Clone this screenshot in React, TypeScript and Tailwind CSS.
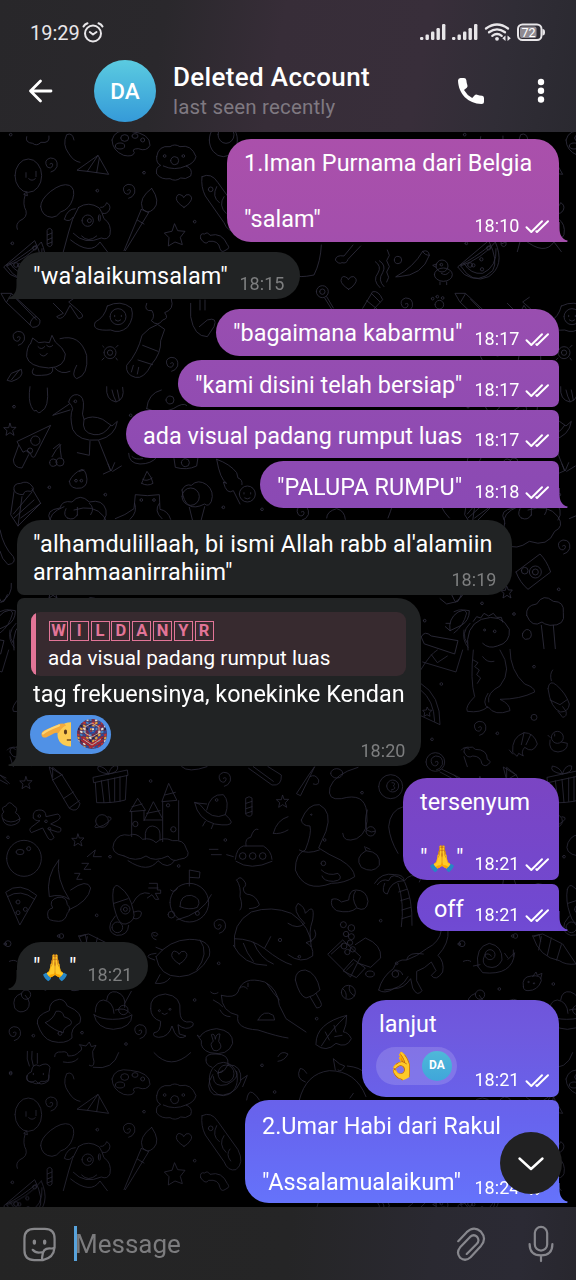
import type { ReactNode } from "react";

const SPIRAL = "m0 0 q9 -6 8 4 q-4 13 -17 4 q-11 -20 10 -26 q24 0 20 26 q-6 14 -18 16";
const HEART = "m0 20 q-22 -14 -23 -26 q2 -17 14 -11 q8 3 8 8 q6 -12 16 -9 q14 8 3 22 q-6 10 -18 16 z";
const STAR = "m0 -30 l9 20 l22 2 l-14 18 l6 22 l-22 -8 l-20 12 l2 -25 l-14 -14 l22 -5 z";
const DOT = "m-4 0 a4 4 0 1 0 8 0 a4 4 0 1 0 -8 0";

function circle(x: number, y: number, r: number, ry = r) {
  return `M${x - r} ${y} a${r} ${ry} 0 1 0 ${2 * r} 0 a${r} ${ry} 0 1 0 ${-2 * r} 0`;
}
const at = (x: number, y: number, d: string) => `M${x} ${y} ${d}`;

/* Wallpaper doodles, drawn at three times their size on the tile. */
const doodles: { x: number; y: number; d: string[] }[] = [
  {
    x: 0,
    y: 130,
    d: [
      "M80 20 q-6 18 18 20 q12 10 25 -3 q28 4 24 -19",
      "M222 30 q-4 -24 -22 -16 q-14 30 6 56 q14 24 34 27",
      "M232 120 L294 76 L326 133 L262 124 Z M294 76 L262 124 M298 84 L290 128",
      "M336 30 q8 -35 55 -26 q60 6 59 42 q-10 20 -35 10 q-22 0 -12 12 q-4 14 -32 8 q-34 -14 -35 -46",
      circle(374, 24, 12, 10), circle(405, 18, 9, 7), circle(360, 48, 14, 9), circle(428, 30, 6),
      "M470 80 q5 -35 40 -30 q14 -10 30 0 q34 -8 48 30 q-5 20 -30 28 q22 8 14 30 q-16 12 -30 6 q-16 12 -32 2 q-26 4 -40 -14 q-4 -20 12 -26 q-14 -6 -12 -26 M490 108 q34 16 68 0",
      circle(524, 92, 12), at(494, 78, DOT), at(550, 78, DOT),
      circle(670, 30, 42, 50), circle(678, 14, 24, 26),
      circle(85, 137, 40, 50), "M78 128 v14 M108 124 v16 M86 146 q10 10 20 0 M72 192 l8 -6 l2 10 z M75 196 q-8 28 3 46 q5 20 -18 30 q-14 10 -8 26",
      at(150, 102, SPIRAL), at(383, 181, SPIRAL), at(432, 128, DOT), at(292, 182, DOT), at(584, 275, DOT), at(37, 340, DOT), at(32, 14, DOT),
      "M122 230 q0 -22 30 -46 q34 -26 56 -18 q20 10 10 42 q-10 30 -36 38 q-12 16 -26 16 q-30 -2 -34 -32",
      "M236 232 q30 -20 62 2 q8 12 14 32 q24 16 18 48 q-8 18 -26 10 q-50 22 -84 -14 M226 236 q-24 0 -33 32 q16 10 26 -6 M302 232 q12 2 18 -14 q14 8 8 22 q-8 14 -20 10 M236 232 q-22 36 -30 74 L190 365 M212 330 q60 48 88 6 L322 365 M245 318 q20 22 45 0",
      circle(263, 272, 17), circle(268, 272, 6), circle(298, 264, 3, 10),
      "M455 175 q-40 30 -28 60 q15 20 34 2 q22 -22 -6 -62 M424 238 L372 362 M446 248 L376 362 M424 238 l22 10 M412 270 l20 12",
      at(552, 212, HEART), at(524, 312, STAR),
      "M606 140 q28 -14 48 18 l60 84 q20 40 -6 60 q-24 6 -36 -24 l-56 -80 q-14 -28 -10 -58", circle(632, 178, 7), "M650 170 q-16 30 8 48 M672 200 q-18 26 6 50 M690 240 q-14 16 2 36",
      "M602 326 q-4 -18 12 -14 q8 -8 16 4 q36 -10 52 28 q10 10 -4 16 q-14 10 -18 -4 q-4 -26 -34 -22 q-10 14 -24 -8",
      "M142 300 q6 -10 14 0 v45 q-8 10 -14 0 z M142 315 l14 -6 M142 330 l14 -6 M142 342 l14 -6",
      "M12 410 L104 332 q30 60 12 90 q-40 40 -84 12 z M20 405 q40 -20 90 -60", circle(48, 405, 7), circle(104, 354, 6),
      "M4 490 l30 0 l86 80 q2 22 -22 22 l-80 -76 z M34 492 l-14 24 M108 560 q-16 4 -18 24 M50 508 l60 62",
      "M160 520 l30 30 l-20 10 q10 12 24 -4 l16 -30 l26 40 q24 -4 0 -24 l-30 -26 l20 -14",
      "M322 528 q40 -20 72 6 q10 30 -12 58 q-24 20 -50 8 q-60 4 -46 -24 q28 -14 36 -48",
      circle(354, 560, 24), "M344 556 v4 M364 556 v4 M346 570 q8 8 16 0",
      "M440 520 q-10 24 16 22 q10 18 -2 30 q20 20 34 -2 q20 -4 6 -22 q30 -10 20 -40 M474 584 l20 14 l-12 34 q2 38 -28 72 q-22 44 -48 38 q-30 -8 -26 -36 q34 -38 46 -90 l22 -20 z M428 646 l46 18 M414 690 l44 14 M400 706 l-6 20 M416 712 l-4 20",
      "M572 520 v40 q10 60 50 60 l20 -30 q12 -30 -20 -20 l-24 20 M600 510 v30 M615 510 v30",
      "M92 640 l6 -16 l18 14 q20 -4 32 0 l8 -22 l10 20 q24 18 30 36 q0 40 -50 42 q-60 -4 -66 -34 q0 -30 12 -40 M180 626 q60 -16 80 50 q6 60 -30 70 q-18 -8 0 -40 M100 716 q-14 24 24 20 q40 0 34 -22 M164 714 q20 22 46 10 M114 650 q10 12 20 0 M140 646 q10 10 18 0 M120 672 q12 14 22 -2",
      at(52, 622, SPIRAL), at(512, 700, SPIRAL), circle(330, 668, 18), circle(330, 668, 8),
      "M312 652 l-4 -4 M348 652 l6 -6 M312 684 l-6 6 M348 684 l4 6",
      "M22 750 l12 -20 l30 -12 q10 24 -28 36 z M34 750 l24 -30",
    ],
  },
  {
    x: 288,
    y: 130,
    d: [
      "M195 345 L168 378 q-24 -4 -26 12 q10 14 20 8 q14 4 18 -10 l38 -40",
      "M20 435 q10 10 58 0 q20 -40 22 -90 M262 395 q20 14 8 34 q-18 22 6 44 M274 392 q22 14 10 36 q-16 22 4 42 M298 360 l6 16 l-8 16 l8 18 l-8 16 l6 16 l-6 14",
      circle(330, 390, 11), "M324 440 q54 -30 80 -76 q18 -6 20 12 q-20 60 -90 64 z M404 364 q6 12 20 12",
      at(182, 458, HEART), circle(103, 485, 18), circle(103, 485, 8), "M116 500 l20 34 M110 504 l20 32 M224 535 l30 -50 q18 -4 30 24 l-28 30 M236 512 l30 24 M250 490 l26 26",
      circle(462, 408, 18), circle(466, 434, 27, 20), at(460, 404, DOT), "M444 412 l-10 -6 l12 -4 M456 456 v8 M476 456 v8 M460 430 q14 10 24 -4",
      at(352, 522, SPIRAL), circle(454, 524, 13), circle(434, 506, 4), circle(448, 500, 4), circle(464, 504, 4),
      "M518 408 q64 -22 104 -72 q30 70 -20 104 q-50 24 -84 -32 M528 400 q20 34 56 30 q44 -20 40 -74", circle(556, 406, 5), circle(580, 388, 5), circle(582, 418, 5),
    ],
  },
  {
    x: 0,
    y: 390,
    d: [
      "M90 -10 q-6 40 4 60 q10 20 14 10 q8 14 16 4 q24 -10 18 -70 M320 -10 q-4 40 28 46 q28 -8 20 -44 M336 0 q4 20 12 34 M352 0 l6 30",
      at(42, 50, DOT), at(30, 116, "m0 -16 l4 12 l14 0 l-10 10 l4 14 l-12 -8 l-12 8 l3 -14 l-10 -9 l14 0 z"), at(392, 76, DOT),
      "M206 36 q6 -24 26 -22 q22 4 18 40 q-6 20 2 34 q24 -14 56 0 l28 20 l16 -14 q-6 44 -56 56 q-60 6 -78 -32 q-10 -40 0 -62 q-2 -10 -12 -20 M208 42 L158 76 L210 60 M252 88 q-10 40 30 46 q30 4 50 -28 M270 154 l-2 42 l-36 -8 M296 152 l36 90 l-22 10 M332 242 l-8 -20 M334 242 l10 -24 M338 244 l26 -16", circle(226, 34, 4),
      "M52 154 L152 106 L104 200 q-8 6 -12 -8 q-8 -16 -22 -6 z M56 166 l-16 44 q2 24 26 24 l20 -40", circle(106, 152, 14), circle(90, 182, 8),
      "M156 200 q12 -24 26 -36 M184 202 q-4 -24 -4 -38 M160 176 l18 -14", circle(160, 218, 11), circle(180, 216, 12),
      "M208 274 q10 -24 38 -36 q10 4 12 14 q10 34 -14 42 q-34 6 -36 -20 M238 244 l14 -4", at(228, 272, DOT), at(244, 272, DOT), at(148, 292, DOT), at(316, 314, DOT), at(670, 352, DOT), at(786, 358, DOT),
      "M425 280 q10 -24 16 -36 q16 20 18 36 q-16 10 -34 0 M428 268 q12 8 28 -4",
      "M42 300 q-4 -20 20 -20 q20 -10 34 8 q10 12 -4 16 q-20 -4 -22 10 q-24 0 -28 -14 M42 305 L32 374 L54 408 L122 340 L96 296 M54 408 L66 320 M40 372 L96 306",
      "M150 390 q-16 -30 30 -36 q6 -24 36 -18 q24 -28 52 0 q40 -10 50 24 q4 16 -6 30 M198 356 q-10 20 4 28 M268 340 q18 14 4 34 M232 352 v24",
      "M346 386 q30 -10 56 -30 l4 -42 q36 6 72 0 l2 44 q24 4 32 30 M404 340 q10 26 -14 48 M478 340 q-18 22 8 46", at(424, 330, DOT), at(462, 330, DOT),
      "M546 300 q10 -20 28 -14 q20 -20 46 -2 q24 20 14 50 q-8 18 -20 8 q-60 30 -68 -42 M568 352 l22 90 l24 -92", circle(572, 320, 26),
      "M650 208 q10 60 30 72 l-10 -4 q10 40 30 26 l20 40 M650 208 q40 14 60 40 l4 16 q14 4 12 20", circle(742, 312, 24), "M732 308 v4 M752 308 v4 M734 324 q8 6 16 0",
      "M386 190 q0 30 34 32 q34 0 50 -20 M396 200 q10 10 32 6 M522 206 l4 26 q34 10 64 -4 l4 -26", circle(556, 218, 12),
      "M440 56 q4 -46 44 -56 M440 56 q40 18 80 0 q30 -20 40 -10", circle(510, 30, 12),
      "M0 420 q10 50 40 80 q10 20 -16 24 q-20 -18 -24 -40 M34 580 q4 36 -30 56",
    ],
  },
  {
    x: 288,
    y: 390,
    d: [
      at(40, 366, SPIRAL), "M116 384 q0 -20 30 -28 q24 6 26 32 M300 384 q8 -20 12 -34 M540 384 L600 330 M560 384 L620 340 M460 350 q10 20 24 34",
      "M650 400 q-10 -30 40 -50 M720 360 q60 -20 90 20 q20 30 -10 44 q-20 50 -76 30 q-40 30 -70 8 q-14 -30 -4 -62 M700 384 q20 10 30 -10",
      "M684 546 L756 492 q20 20 32 54 L720 598 q-24 -20 -36 -52", circle(742, 546, 18), circle(710, 542, 10), circle(742, 546, 9),
      at(824, 468, SPIRAL), at(656, 606, "m0 -18 l5 12 l12 0 l-8 10 l4 14 l-12 -8 l-12 8 l3 -14 l-10 -9 l13 0 z"), at(582, 640, DOT), at(678, 672, DOT), at(812, 598, DOT), at(410, 692, DOT),
      "M486 722 q-6 -36 24 -56 q20 -10 34 -4 q0 30 -24 44 l-34 16 l-14 -12 M486 700 l-12 0 M456 626 l20 16 l34 -8 l10 -20 M490 612 l10 20",
      "M540 780 q-10 -70 40 -92 q60 -20 84 30 q4 40 -36 50 q-26 10 -44 -8 M556 694 l10 -14 l12 4 l10 -14 l14 8 l14 -8 l10 12 l14 0 l4 14", circle(590, 720, 3), at(620, 724, DOT),
      "M716 676 q-4 -30 30 -34 q20 -34 50 -8 q34 0 30 34 q8 40 -40 38 q-20 -4 -24 -10 q-30 20 -46 -20 M760 706 l8 70 M796 706 l6 70 M704 730 q10 -20 24 -6 q8 24 -16 24 q-12 -6 -8 -18",
      "M400 740 q10 -20 30 -2 l80 14 l-10 40 l-90 -30 z",
    ],
  },
  {
    x: 0,
    y: 600,
    d: [
      "M0 35 q30 -14 38 4 q-10 40 -38 60 M48 70 q-30 30 -8 60 M30 90 q-6 30 12 52 M22 450 q10 -14 24 -2 M30 470 l10 30",
      "M0 525 L28 550 M0 540 L22 552", at(78, 546, "m0 -16 l4 12 l14 0 l-10 10 l4 14 l-12 -8 l-12 8 l3 -14 l-10 -9 l14 0 z"), at(234, 718, "m0 -16 l4 12 l14 0 l-10 10 l4 14 l-12 -8 l-12 8 l3 -14 l-10 -9 l14 0 z"), at(848, 602, "m0 -16 l4 12 l14 0 l-10 10 l4 14 l-12 -8 l-12 8 l3 -14 l-10 -9 l14 0 z"),
      "M148 502 l10 38 l50 85 q24 16 32 -14 l-54 -86 z M158 540 l28 -16 M190 596 l30 -20 M208 624 l30 -22",
      "M280 532 l102 -22 l2 16 l-102 22 z M286 548 l4 60 q50 2 86 -8 l4 -74 M304 542 l8 66 M324 538 l6 70 M344 534 v70 M360 530 v74 M325 522 q-40 -6 -30 -24 q24 4 30 24 q10 -30 28 -24 q4 20 -28 24",
      at(670, 535, SPIRAL), at(452, 543, DOT), at(24, 712, DOT), at(676, 720, DOT), at(330, 770, DOT), "M545 500 q20 20 76 0 M746 505 l70 50 q30 4 28 -30 l-40 -25 M760 500 l60 44",
      "M8 656 q24 20 52 0 q-4 -14 -14 -18 q10 -14 -4 -20 q-14 -20 -24 0 q-18 4 -6 18 q-10 6 -4 20 q4 20 26 20 q26 -4 26 -20",
      "M100 654 q-4 -22 16 -24 q22 -2 22 20 l36 -8 q14 10 -2 20 l-20 10 l30 12 q4 14 -10 12 l-24 -8 l14 24 q-8 14 -18 2 l-16 -30 l-34 14 q-10 -10 2 -18 l24 -18 q-14 2 -20 -8", at(118, 648, DOT), at(138, 664, DOT), at(148, 686, DOT),
      circle(306, 663, 19), "M290 672 q-18 20 20 4 q40 -24 14 -26",
      "M395 710 V634 M432 632 V662 M390 634 L413 595 L436 630 Z M433 660 H487 M433 660 L460 605 L487 655 M488 725 V606 M486 604 L506 550 L530 600 Z M536 602 V720 M436 718 V700 q4 -22 22 -22 q22 4 22 24 v18", circle(406, 672, 8), circle(504, 616, 5), circle(520, 688, 8), "M396 620 l30 -8 M440 640 l40 -8 M494 585 l32 -8",
      "M372 768 q-44 -8 -30 -40 q14 -30 46 -22 q20 -10 40 12 q24 -6 40 10 q20 -20 50 -6 q34 -4 40 22 q20 30 -20 34 q-20 10 -34 -10 q-40 20 -66 0 q-30 20 -66 0",
      "M620 630 q10 -50 50 -46 q20 20 6 60 M584 608 q10 50 60 64 q50 8 50 -6 q-4 -10 -18 -22 q-40 20 -76 -30 z M584 608 l36 4 M616 664 l-8 14 M640 672 l-6 14", circle(650, 600, 4),
      "M738 594 q10 -8 18 0 v50 q-8 10 -18 0 z M738 610 l18 -6 M738 626 l18 -6 M738 640 l18 -6", "M820 700 q10 -40 44 -50 M820 700 q20 4 44 -10",
      circle(72, 775, 52, 54), circle(60, 756, 12, 8), circle(86, 746, 6), "M262 770 l24 -20 l-6 20 l24 0",
      "M706 778 q4 -34 24 -40 h60 q24 14 26 40 M738 738 q-4 -24 14 -26 q10 -30 22 -24 M628 748 h26 M634 764 h30 M680 764 l20 6",
      circle(728, 768, 10), circle(758, 768, 10), circle(788, 768, 10),
    ],
  },
  {
    x: 288,
    y: 650,
    d: [
      "M398 60 q30 -50 50 -60 M404 36 l100 30 l20 -66 M430 14 l18 24 l30 -20 M398 100 q60 36 58 124 l-60 -28 M398 120 q40 30 42 94", at(418, 184, "m0 -12 l4 8 l10 1 l-8 8 l2 10 l-9 -5 l-9 5 l2 -11 l-6 -7 l10 -1 z"), at(460, 102, DOT), at(432, 268, DOT), at(628, 250, DOT), at(738, 50, DOT), circle(738, 202, 9),
      "M556 0 q-10 90 4 140 q-30 30 -22 44 q40 6 62 -14 q20 30 66 12 q0 -20 -30 -34 q60 0 104 -22 q0 -14 -30 -24 q-44 -40 -44 -104 M600 130 q-20 30 0 44 M636 0 q40 60 0 108 q-40 20 -34 48 M584 20 q14 20 34 14 M556 30 l14 8 l-10 12 l14 10 l-8 14 l12 10 l-10 16",
      "M780 116 q4 -30 26 -10 q28 24 38 56 q-2 24 -26 24 q-30 -10 -38 -70 M790 92 q-6 -20 4 -32 M810 184 l14 18 q14 -2 10 -18 l-10 -14 M786 150 l30 14 l20 -14",
      circle(808, 262, 18), "M786 270 q-6 34 24 36 q30 -4 28 -26 l-18 -4 M800 252 v6 M786 262 l-6 -6", at(572, 232, SPIRAL),
      circle(442, 336, 28), at(442, 336, SPIRAL), "M462 358 L516 384 M456 366 L490 384 M528 306 q0 -18 16 -14 q10 -4 18 6 q36 0 36 30 q14 6 4 14 q-10 10 -20 0 q-4 -24 -28 -24 q-16 10 -26 -12",
      "M674 306 q-4 -44 34 -58 q30 0 40 34 q-14 30 -38 10 q-12 14 -4 26 l-14 -8 l-4 8 z M708 248 l-8 36 M728 254 l-14 30", at(664, 300, "m0 0 l10 12"),
      "M656 382 l0 -30 l30 24 M26 430 L64 372 L80 350 L38 436 Z M66 380 q16 -10 26 10 q2 18 -16 12 M128 370 a18 14 0 1 0 36 0 a18 14 0 1 0 -36 0 M210 352 q-70 20 -84 60 q-10 40 34 34 q70 -20 76 40 q8 60 -30 80 q-40 14 -42 -16",
      circle(308, 410, 36), circle(314, 408, 18), "M312 398 q14 0 4 10 q12 8 -6 12 M238 480 q-10 30 -2 60 q14 10 26 4 M346 470 q-40 10 -44 60 q4 40 28 80", circle(248, 544, 14),
      "M40 510 q20 -50 54 -46 q40 20 20 80 q-14 30 -22 50 q30 20 66 36 q40 24 42 50 q-30 20 -70 20 q-80 30 -108 -40 q0 -50 30 -60 q20 -50 14 -72 q-24 0 -26 -18 M34 600 q24 14 60 0 M100 660 q20 20 50 10 q20 20 -14 24 q-30 0 -34 -16", circle(106, 640, 7), circle(70, 494, 2),
      "M234 602 q-36 20 -14 50 q34 20 54 -6 q6 -40 -40 -44 l-4 -12 M234 592 l12 6 M132 748 q-8 20 14 34 q40 10 60 -8 q30 14 34 -20 q-4 -34 -36 -34 q-20 0 -22 30 l-22 6 q-14 -14 -28 -8 M202 724 q-14 20 4 48",
      "M260 700 q20 -34 60 -26 q30 0 28 20 q20 -30 50 -8 l-4 10 M268 704 q14 -20 34 -12 q10 -30 46 0 q-40 0 -50 40 q-20 -2 -8 -32 M330 700 q20 60 10 130 M350 696 q24 50 22 130 M332 726 l24 -8 M338 752 l26 -8 M342 780 l26 -8 M342 806 l26 -8",
      "M0 820 q30 20 50 0 q-40 -40 -20 -60 q20 10 22 30 q30 -34 22 20 q-14 40 -4 64", circle(166, 824, 9), circle(190, 834, 10), circle(174, 852, 8), at(110, 570, DOT), at(222, 428, DOT), at(278, 812, DOT),
    ],
  },
  {
    x: 0,
    y: 860,
    d: [
      "M18 96 q40 -34 92 10 L60 194 Z M22 110 q40 -26 82 8", circle(54, 126, 6), circle(76, 148, 6), circle(54, 158, 6),
      "M176 0 q-40 50 -28 110 q34 -10 60 8 q-40 -60 -32 -118 M144 172 q-6 -24 14 -28 q-14 -24 16 -32 q26 -4 28 22 q14 12 0 26 q-6 24 -26 24 q-34 -2 -32 -12 M206 150 q60 -26 66 -66 q-10 -30 -60 6 M224 40 h16 l-10 18 h16 M246 10 h20 l-14 18 h20 M384 2 q60 40 90 0 q30 30 50 0 M708 4 q44 30 108 0",
      "M340 88 q6 -20 20 -6 q30 20 40 70 q10 30 -22 40 q-20 4 -30 -30 q-14 -40 -8 -74 M342 130 l42 -14 M346 168 l-14 20 q-10 30 18 38 q34 2 36 -30 M402 156 q30 -10 20 12 q-10 14 -22 6 M398 130 q20 -40 50 -30 M448 70 h24 v20 h10 v10 h-16 l10 18 h-10 l-10 -14 l-14 10 M446 84 h28", circle(376, 148, 14), circle(376, 148, 6), circle(352, 202, 16),
      circle(568, 128, 58), "M568 78 V30 l32 6 l-2 18 l-28 -2 M540 140 q0 -36 34 -34 q34 10 18 36 q-24 10 -52 -2 M530 180 q80 -20 104 -76 M512 90 q10 10 20 -4", circle(514, 164, 10), circle(592, 160, 6),
      at(655, 196, SPIRAL), at(460, 225, "m0 0 q8 8 14 -2 q-6 -10 -18 -4 q-4 16 12 20"), at(16, 252, DOT), at(176, 228, DOT), at(536, 18, DOT), at(656, 310, DOT), at(290, 166, DOT), at(584, 420, DOT),
      "M710 60 q10 -14 20 0 q14 14 0 24 q0 20 20 20 q20 6 28 30 q-4 10 -30 12 M710 60 q14 20 10 50 q10 30 0 40",
      "M704 260 q-10 -70 50 -104 q60 -20 120 4 q60 40 60 100 M704 236 q50 0 90 30 q50 40 80 48 M700 256 q30 60 100 60 M730 250 q10 30 30 54 M760 246 q20 50 60 66", circle(840, 240, 5), "M812 230 q-10 20 -18 34",
      "M468 290 q40 -50 100 -52 q70 0 60 50 q-30 60 -90 62 q-60 0 -70 -60 M600 240 q30 40 -10 90 M468 280 q-34 4 -20 14 l16 6 M480 344 l-14 26 q30 4 44 -16 M488 270 l-20 -8", at(538, 292, HEART),
      "M64 400 q-30 10 -20 44 q14 20 36 6 q18 -20 -4 -44 M112 490 q-4 -24 36 -38 q0 -30 30 -34 q16 0 24 20 q50 20 38 50 q-30 16 -24 46 q-20 20 -60 10 q-30 -8 -44 -54 M136 488 q24 -10 32 -34 q20 -4 24 16 q30 10 20 24 q-24 10 -22 24 q-24 -4 -54 -30", circle(180, 520, 6),
      "M282 464 q20 14 56 14 q40 0 58 -14 q0 40 -56 44 q-50 -2 -58 -44 M286 456 q0 -34 24 -36 q30 4 32 40 M320 420 q4 -30 30 -24 q30 10 24 46 M374 430 l20 -36 M346 450 q30 -10 44 10", circle(370, 450, 14),
      "M452 446 q-4 -40 44 -44 q50 6 44 54 q0 26 20 30 q26 -4 18 12 q-20 16 -44 -4 l4 28 l20 6 q-20 14 -34 -10 l-8 -20 q-10 34 -40 34 q-20 -2 -14 -14 q20 0 20 -34 q-30 -10 -30 -38", circle(478, 452, 3), circle(510, 448, 3), "M486 460 q8 8 16 0",
      at(40, 518, SPIRAL), at(417, 512, SPIRAL), at(100, 527, DOT), at(246, 518, DOT), at(378, 552, DOT), at(786, 616, DOT), at(32, 638, DOT),
      "M664 406 q40 10 50 -10 q14 -50 80 -30 q40 20 44 70 l20 40 l60 40 M664 406 q0 50 50 60 q-10 40 60 44 q60 20 90 24 M774 480 h50 l-4 -14 q-30 -20 -46 14 M720 384 q10 -10 22 2 M744 370 v10 M632 396 q10 10 22 2 M640 420 q20 10 28 20 M660 450 q10 20 30 20 M800 370 q20 30 38 50",
      "M600 530 q10 -20 50 -24 q50 6 48 44 q-14 40 -68 28 q-30 -10 -26 -36 l-12 -16 z M640 570 q-14 -20 0 -26 l-6 -20 q10 -6 12 14 q2 -18 14 -16 l-4 22 q16 20 -4 28 z",
      "M82 574 q-4 24 6 44 M96 574 q-4 24 4 44 M112 580 v30 M82 660 q-4 -20 12 -24 q4 -30 24 -18 q24 -14 32 4 q-4 20 -4 40 q-24 20 -40 0 q-14 10 -24 -2 M164 590 q0 -16 20 -14 q20 -4 20 12 q24 0 30 -10 q20 -10 4 -24 l20 4 l10 -12 l6 14 l14 -4 l-10 18 q0 20 4 30 q0 20 -14 12 M280 622 q60 10 76 -44 M462 578 q50 56 110 0 M100 640 v4 M130 640 v4 M190 606 q30 6 44 -10",
      "M618 600 q-4 -20 30 -18 q40 0 36 32 q44 0 38 50 q-20 50 -80 40 q-30 -20 -4 -60 M636 622 q-20 -8 -18 -22 M640 650 q0 34 40 24 q40 -20 30 -40 M722 660 l20 -14 l-14 34 M654 640 l14 -8 M684 614 q-20 40 -40 16",
      "M740 720 q4 -30 18 -22 q14 10 20 22 M834 590 q10 -20 30 -8 q-10 20 -30 22", at(824, 696, DOT),
    ],
  },
  {
    x: 288,
    y: 930,
    d: [
      "M0 74 q40 30 74 4 q4 -30 -20 -40 q40 -10 26 -38 M120 72 l44 -42 l54 50 l-30 60 z M130 72 l34 -30 M166 122 l30 -34 l36 26 l-26 28 z M176 120 l20 -20 M202 44 l30 -20 q50 20 46 60 l-30 28 l-36 -12", circle(168, 48, 9), circle(186, 38, 8), circle(194, 58, 8), circle(178, 66, 8), circle(190, 20, 9), circle(246, 132, 13, 9),
      "M272 180 q10 -40 44 -64 q10 -30 40 -26 q30 -10 60 -34 q40 -20 44 -56 l20 0 q4 40 -30 76 q20 20 14 50 q-20 30 -34 10 l14 -14 l-14 -26 q-20 20 -44 28 l0 28 l16 30 q-14 20 -28 -8 l-6 -28 q-20 30 -50 30 q-30 18 -46 4 M356 88 q6 -24 50 -16 M320 120 q20 0 24 14 M290 180 q50 0 70 -40", circle(322, 132, 10),
      "M22 150 q0 -30 30 -30 q34 8 44 60 q-20 20 -42 24 q-20 -6 -32 -54 M66 200 l20 34 q20 -2 12 -18 l-14 -26", circle(181, 187, 21), "M164 176 q14 10 10 28 M184 168 q-4 20 16 30", at(34, 80, DOT), at(86, 266, DOT), at(326, 100, DOT),
      "M84 340 q0 -60 92 -84 q0 30 -10 50 q14 0 24 20 q-14 30 -46 14 q-30 30 -60 4 z M100 348 q30 -50 76 -92 M124 330 l-12 -24 M144 306 l-6 -20 M140 320 l22 -4",
      "M34 510 q20 -80 90 -88 q80 0 110 78 M56 430 q-10 -16 -20 -14 q-14 30 16 40 M142 420 l-6 -34 q20 20 34 22 q-10 20 -20 12 M178 408 q40 4 50 20 M186 504 l10 -14",
      "M570 110 q-10 -60 34 -70 q40 8 38 50 q-14 30 -44 20 q-20 -10 -8 -34 q10 -10 20 2 M570 110 l14 18 q90 10 96 -60 l-20 20 M526 94 q14 -6 22 0 M556 108 l20 -4 M650 70 l10 14 M676 60 v20", circle(606, 74, 15),
      circle(522, 41, 9), circle(682, 18, 7), at(634, 177, DOT), at(796, 162, DOT), circle(576, 194, 14),
      "M734 18 l30 -6 l60 30 l40 60 q-30 4 -50 -10 q-60 -10 -80 -74 M760 20 l-8 40 M790 24 l-12 52 M820 44 l-14 46 M738 20 l16 -6 l4 20",
      "M706 170 q-6 -30 24 -32 q30 -4 30 14 q-10 30 -40 30 q-14 0 -14 -12 M734 140 l10 -14 l4 10 l14 -6 l-4 16", circle(722, 156, 2), circle(738, 160, 2),
    ],
  },
];

function Wallpaper() {
  return (
    <svg className="absolute inset-0 h-full w-full" viewBox="0 0 576 1280" aria-hidden="true">
      <defs>
        <linearGradient id="ink" gradientUnits="userSpaceOnUse" x1="0" y1="0" x2="0" y2="4000">
          <stop offset="0" stopColor="#302f3e" />
          <stop offset="1" stopColor="#252431" />
        </linearGradient>
        <g id="tile" fill="none" stroke="#2a2937" strokeWidth="2.5" strokeLinecap="round" strokeLinejoin="round">
          {doodles.map((g, i) => (
            <g key={i} transform={`translate(${g.x} ${g.y}) scale(0.33333)`} stroke={g.y === 130 || g.y === 390 ? "#302f3e" : undefined}>
              {g.d.map((d, j) => (
                <path key={j} d={d} />
              ))}
            </g>
          ))}
        </g>
      </defs>
      <use href="#tile" x="-454" />
      <use href="#tile" />
      <use href="#tile" x="454" />
      <g opacity="0.85">
        <use href="#tile" x="-454" y="939" />
        <use href="#tile" y="939" />
        <use href="#tile" x="454" y="939" />
      </g>
    </svg>
  );
}

function Checks() {
  return (
    <svg className="h-[15px] w-[25px] shrink-0" viewBox="0 0 25 15" fill="none" stroke="#fff" strokeWidth="2" strokeLinecap="round" strokeLinejoin="round">
      <path d="M1.500 8.200 L6.300 13 L17 2.300 M11.300 12.300 L12 13 L23 2.300" />
    </svg>
  );
}

function Tail({ side, color }: { side: "left" | "right"; color: string }) {
  return (
    <svg
      className={side === "right" ? "absolute right-[-9px] bottom-0 h-[20px] w-[10px]" : "absolute bottom-0 left-[-9px] h-[20px] w-[10px] -scale-x-100"}
      viewBox="0 0 10 20"
    >
      <path d="M0 0 H1.500 V6 C1.500 13 4 17 9.500 18.600 Q10 19.600 9 20 H0 Z" fill={color} />
    </svg>
  );
}

function Out({ box, time, pad = "pt-[11px]", timeAt = "bottom-[5px]", tail, children }: { box: string; time: string; pad?: string; timeAt?: string; tail?: string; children: ReactNode }) {
  return (
    <div
      className={`relative mr-[17px] shrink-0 self-end bg-[linear-gradient(180deg,#ab50ab_130px,#a44fac_230px,#984eb0_320px,#8c4ab3_480px,#7a45c4_790px,#7049d2_920px,#6f59de_1030px,#6764ee_1120px,#6573fb_1205px)] bg-fixed ${box}`}
    >
      <div className={`flex h-full flex-col pl-[17px] text-[23.4px] leading-[27.8px] tracking-[0.03px] text-white ${pad}`}>{children}</div>
      <div className={`absolute right-[9px] flex items-center gap-[5.500px] text-[18px] leading-[22px] tracking-[0.05px] text-white ${timeAt}`}>
        <span>{time}</span>
        <Checks />
      </div>
      {tail && <Tail side="right" color={tail} />}
    </div>
  );
}

function In({ box, time, pad = "pt-[11px]", tail, children }: { box: string; time: string; pad?: string; tail?: boolean; children: ReactNode }) {
  return (
    <div className={`relative ml-[17px] shrink-0 self-start bg-[#212324] ${box}`}>
      <div className={`flex h-full flex-col pl-[16px] text-[23.4px] leading-[27.8px] tracking-[0.03px] text-white ${pad}`}>{children}</div>
      <span className="absolute right-[15.500px] bottom-[4px] text-[18px] leading-[22px] tracking-[0.05px] text-[#7d7e7f]">{time}</span>
      {tail && <Tail side="left" color="#212324" />}
    </div>
  );
}

function Pray() {
  return (
    <span>
      "<span className="inline-block w-[28.500px] scale-x-[1.100] scale-y-[1.080] text-center">🙏</span>"
    </span>
  );
}

function StatusBar() {
  const bars = (x: number) =>
    [3, 5.5, 8.5, 12, 16].map((h, i) => <rect key={x + i} x={x + i * 5.5} y={17 - h} width="3.4" height={h} rx="1.2" />);
  return (
    <div className="flex h-[60px] items-center pt-[5px] pr-[30px] pl-[30px]">
      <span className="text-[20px] leading-[24px] text-[#e8e6e9]">19:29</span>
      <svg className="ml-[2px] h-[22px] w-[22px]" viewBox="0 0 22 22" fill="none" stroke="#e8e6e9" strokeWidth="2" strokeLinecap="round" strokeLinejoin="round">
        <circle cx="11" cy="11.500" r="8" />
        <path d="M1.500 4.500 Q2.500 2.500 5.500 1.300 M20.500 4.500 Q19.500 2.500 16.500 1.300 M7.800 10 L11 12.500 L14.500 10" />
      </svg>
      <svg className="ml-auto h-[20px] w-[126px]" viewBox="0 0 126 20" fill="#e8e6e9">
        {bars(0)}
        {bars(32)}
        <g fill="none" stroke="#e8e6e9" strokeWidth="2.300" strokeLinecap="round">
          <path d="M66 5.500 Q77 -2.500 88 5.500" />
          <path d="M69 9.300 Q77 3.500 85 9.300" />
          <path d="M72.300 12.800 Q77 9.300 81.700 12.800" />
        </g>
        <circle cx="77" cy="15.800" r="1.900" />
        <path d="M85.500 12.500 V18 L82.300 15.200 Z M87.500 12.500 L90.800 15.200 L87.500 18 Z" />
        <rect x="98" y="1.500" width="23.500" height="15.500" rx="4.500" fill="none" stroke="#e8e6e9" strokeWidth="2" />
        <rect x="100" y="3.500" width="16.500" height="11.500" rx="2" fill="#8f8a91" />
        <path d="M122.500 6 q2.500 0 2.500 3.300 q0 3.300 -2.500 3.300 z" />
        <text x="101.500" y="14" fontSize="12.500" fill="#fff" fontFamily="Roboto, sans-serif">72</text>
      </svg>
    </div>
  );
}

function Header() {
  return (
    <header className="relative h-[132px] shrink-0 bg-[linear-gradient(100deg,#28272a_0%,#2a282c_28%,#372d38_48%,#382e3a_72%,#302d36_86%,#2a2930_100%)]">
      <StatusBar />
      <div className="flex h-[62px] items-center pl-[28px]">
        <svg className="h-[24px] w-[25px]" viewBox="0 0 25 24" fill="none" stroke="#fff" strokeWidth="2.8" strokeLinecap="round" strokeLinejoin="round">
          <path d="M23 12 H2.500 M12.500 2 L2.500 12 L12.500 22" />
        </svg>
        <div className="ml-[41px] flex h-[62px] w-[62px] items-center justify-center rounded-full bg-linear-to-b from-[#5bcbe0] to-[#359ad8] pt-[2px] text-[22.500px] font-medium text-white">DA</div>
        <div className="ml-[17px] flex flex-col">
          <span className="text-[26px] leading-[31px] font-medium tracking-[0.340px] whitespace-nowrap text-white">Deleted Account</span>
          <span className="mt-[2px] text-[20.500px] leading-[25px] tracking-[0.180px] whitespace-nowrap text-[#7f7981]">last seen recently</span>
        </div>
        <svg className="mr-[52px] ml-auto h-[28px] w-[28px]" viewBox="0 0 28 28" fill="#fff">
          <path d="M1 3.500 Q1.200 1 3.500 1 H7 Q9 1 9.300 3 Q9.600 6 10.400 8.300 Q10.900 9.700 9.800 10.700 L7 13 Q10 18.300 15.200 21 L17.700 18.300 Q18.700 17.300 20 17.700 Q22.500 18.600 25.200 18.800 Q27 19 27 21 V24.500 Q27 27 24.500 27 C11 26.500 1.500 17 1 3.500 Z" />
        </svg>
        <svg className="mr-[31px] h-[26px] w-[8px]" viewBox="0 0 8 26" fill="#fff">
          <circle cx="4" cy="4" r="3.200" />
          <circle cx="4" cy="12.800" r="3.200" />
          <circle cx="4" cy="21.500" r="3.200" />
        </svg>
      </div>
    </header>
  );
}

function SaluteIcon() {
  return (
    <svg className="h-[30px] w-[30px]" viewBox="0 0 30 30">
      <path d="M30 3.200 C21 3.200 16.500 9 16.500 15.500 C16.500 22 21 27.500 30 27.500 Z" fill="#fccb52" />
      <path d="M0.500 16 C0 12.500 4 11 8 9.500 L19 4.800 Q24 3.500 25 6.500 Q21 8 17.500 14 Q14 13 11 15.500 L5 18.500 Q1 19 0.500 16 Z" fill="#f3aa3c" />
      <path d="M2 14.500 Q6 11 18 6.500" stroke="#ffd572" strokeWidth="2.200" fill="none" strokeLinecap="round" />
      <ellipse cx="24.500" cy="13" rx="1.600" ry="2.400" fill="#5b3a1c" />
      <path d="M25.800 21 H30" stroke="#6b431f" strokeWidth="1.400" />
    </svg>
  );
}

function MosaicAvatar() {
  const tints = ["#c9342f", "#2b4aa0", "#e8a33b", "#1d2547", "#e9e3d6", "#7a2548", "#3e86c9"];
  return (
    <svg className="h-[30px] w-[30px]" viewBox="0 0 30 30">
      <defs>
        <clipPath id="round">
          <circle cx="15" cy="15" r="15" />
        </clipPath>
      </defs>
      <g clipPath="url(#round)">
        <rect width="30" height="30" fill="#5a3a5c" />
        {Array.from({ length: 100 }, (_, i) => (
          <rect
            key={i}
            x={(i % 10) * 3}
            y={Math.floor(i / 10) * 3}
            width="2.600"
            height="1.900"
            fill={tints[(i * 5 + Math.floor(i / 7) * 3 + (i % 4)) % 7]}
            transform={`rotate(${i % 10 < 5 ? 28 : -28} ${(i % 10) * 3 + 1.5} ${Math.floor(i / 10) * 3 + 1})`}
          />
        ))}
        <path d="M4 18 L15 25 L26 18 M4 21 L15 28 L26 21" stroke="#a92632" strokeWidth="1.800" fill="none" />
        <path d="M6 20 L15 26 L24 20 M15 4 L22 8 V14 L15 18 L8 14 V8 Z" stroke="#e0b9a0" strokeWidth="0.800" fill="none" />
        <circle cx="15" cy="11" r="3" fill="none" stroke="#2b4aa0" strokeWidth="1.500" />
      </g>
    </svg>
  );
}

function Composer() {
  return (
    <footer className="relative flex h-[73px] shrink-0 items-center bg-[linear-gradient(95deg,#242424_0%,#252526_50%,#2a2931_75%,#2b2a34_90%,#28272e_100%)] pl-[22px]">
      <svg className="mt-[2px] h-[35px] w-[36px]" viewBox="0 0 36 36" fill="none" stroke="#87878a" strokeWidth="2.300" strokeLinecap="round" strokeLinejoin="round">
        <path d="M21 34 H12 Q2 34 2 24 V12 Q2 2 12 2 H23 Q33 2 33 12 V21 Q32 32 21 34 Q19.500 33 20.500 29.500 Q21 22 27.500 22 Q32 22.500 33 21 M10.500 23.500 Q14 27.500 19.500 26" />
        <path d="M12.200 14.500 V16.500 M22.800 14.500 V16.500" strokeWidth="3.400" />
      </svg>
      <div className="ml-[16px] h-[35px] w-[3px] bg-[#58a3dc]" />
      <span className="-ml-[2px] text-[26px] leading-[32px] text-[#7c7c7e]">Message</span>
      <svg className="mr-[40px] ml-auto h-[36px] w-[32px]" viewBox="0 0 32 38" fill="none" stroke="#87878d" strokeWidth="2.300" strokeLinecap="round" strokeLinejoin="round">
        <path d="M2.500 16 L11.500 6.500 Q19 -0.500 26.500 6 Q33 13.500 26.500 21 L15.500 33 Q10 38 4.500 33.500 Q0 28 4.500 22.500 L15 11.500 Q19 8 22.500 11.500 Q25.500 15.500 22 19 L11.500 29.500" />
      </svg>
      <svg className="mr-[21px] h-[38px] w-[28px]" viewBox="0 0 28 40" fill="none" stroke="#87878d" strokeWidth="2.300" strokeLinecap="round">
        <rect x="7.500" y="2" width="13" height="25" rx="6.500" />
        <path d="M2 20 Q2 32 14 32 Q26 32 26 20 M14 32 V38" />
      </svg>
    </footer>
  );
}

export default function App() {
  return (
    <div className="relative flex h-[1280px] w-[576px] flex-col overflow-hidden bg-black font-['Roboto','Noto_Color_Emoji',sans-serif]">
      <Wallpaper />
      <Header />
      <main className="relative flex h-[1075px] shrink-0 flex-col pt-[7px] whitespace-nowrap">
        <Out box="h-[103px] w-[332px] rounded-[24px] rounded-br-none" time="18:10" tail="#a44fac">
          <span>1.Iman Purnama dari Belgia</span>
          <span className="mt-[27.8px]">"salam"</span>
        </Out>
        <In box="mt-[10px] h-[47px] w-[283px] rounded-[24px] rounded-bl-none" time="18:15" tail>
          <span className="tracking-[0.120px]">"wa'alaikumsalam"</span>
        </In>
        <Out box="mt-[10px] h-[47px] w-[343px] rounded-[24px] rounded-br-[7px]" time="18:17" timeAt="bottom-[6px]">
          <span>"bagaimana kabarmu"</span>
        </Out>
        <Out box="mt-[4px] h-[47px] w-[381px] rounded-[24px] rounded-r-[7px]" time="18:17" pad="pt-[12px]" timeAt="bottom-[6px]">
          <span>"kami disini telah bersiap"</span>
        </Out>
        <Out box="mt-[3px] h-[48px] w-[433px] rounded-[24px] rounded-r-[7px]" time="18:17" pad="pt-[13px]" timeAt="bottom-[7px]">
          <span>ada visual padang rumput luas</span>
        </Out>
        <Out box="mt-[3px] h-[47px] w-[299px] rounded-[24px] rounded-tr-[7px] rounded-br-none" time="18:18" pad="pt-[12.500px]" tail="#8b4ab4">
          <span>"PALUPA RUMPU"</span>
        </Out>
        <In box="mt-[12px] h-[75px] w-[495px] rounded-[24px] rounded-bl-[7px]" time="18:19">
          <span className="tracking-[0.175px]">"alhamdulillaah, bi ismi Allah rabb al'alamiin</span>
          <span className="tracking-[0.120px]">arrahmaanirrahiim"</span>
        </In>
        <In box="mt-[3px] h-[168px] w-[404px] rounded-[24px] rounded-tl-[7px] rounded-bl-none" time="18:20" pad="pt-[14px]" tail>
          <div className="-ml-[2px] flex h-[64px] w-[375px] shrink-0 overflow-hidden rounded-[9px] bg-[#372a2f]">
            <div className="w-[5px] bg-[#e27597]" />
            <div className="ml-[13px] flex flex-col">
              <div className="mt-[9px] flex gap-[1.800px]">
                {"WILDANYR".split("").map((c, i) => (
                  <span key={i} className="flex h-[20px] w-[19px] items-center justify-center border border-[#e27597] text-[16.500px] leading-[18px] font-bold text-[#e27597]">{c}</span>
                ))}
              </div>
              <span className="mt-[4px] -ml-px text-[20.700px] leading-[26px]">ada visual padang rumput luas</span>
            </div>
          </div>
          <span className="mt-[5px] tracking-normal">tag frekuensinya, konekinke Kendan</span>
          <div className="mt-[6px] -ml-[3px] flex h-[39px] w-[81px] shrink-0 items-center rounded-full bg-[#5091e6] pl-[11px]">
            <SaluteIcon />
            <div className="ml-[6px]">
              <MosaicAvatar />
            </div>
          </div>
        </In>
        <Out box="mt-[12px] h-[102px] w-[156px] rounded-[24px] rounded-br-[7px]" time="18:21">
          <span>tersenyum</span>
          <span className="mt-[27.8px]"><Pray /></span>
        </Out>
        <Out box="mt-[4px] h-[47px] w-[142px] rounded-[24px] rounded-tr-[7px] rounded-br-none" time="18:21" pad="pt-[12px]" tail="#7049d2">
          <span>off</span>
        </Out>
        <In box="mt-[11px] h-[48px] w-[131px] rounded-[24px] rounded-bl-none" time="18:21" pad="pt-[12px]" tail>
          <Pray />
        </In>
        <Out box="mt-[10px] h-[97px] w-[197px] rounded-[24px] rounded-br-[7px]" time="18:21" timeAt="bottom-[6px]">
          <span>lanjut</span>
          <div className="mt-[8px] -ml-[3px] flex h-[38px] w-[81px] items-center rounded-full bg-white/15 pl-[11px]">
            <span className="w-[31px] scale-[1.120] text-center text-[24px] leading-[30px]">👌</span>
            <div className="ml-[4px] flex h-[30px] w-[30px] items-center justify-center rounded-full bg-linear-to-b from-[#4fb8d8] to-[#3fa6da] text-[12px] font-bold">DA</div>
          </div>
        </Out>
        <Out box="mt-[3px] h-[103px] w-[314px] rounded-[24px] rounded-tr-[7px] rounded-br-none" time="18:24" pad="pt-[13px]" timeAt="bottom-[4px]" tail="#6573fb">
          <span>2.Umar Habi dari Rakul</span>
          <span className="mt-[27.8px]">"Assalamualaikum"</span>
        </Out>
        <div className="absolute right-[14px] bottom-[13px] flex h-[62px] w-[62px] items-center justify-center rounded-full bg-[#212122]">
          <svg className="h-[16px] w-[28px]" viewBox="0 0 28 16" fill="none" stroke="#fff" strokeWidth="2.400" strokeLinecap="round" strokeLinejoin="round">
            <path d="M2.500 3.500 L14 14 L25.500 3.500" />
          </svg>
        </div>
      </main>
      <Composer />
    </div>
  );
}
